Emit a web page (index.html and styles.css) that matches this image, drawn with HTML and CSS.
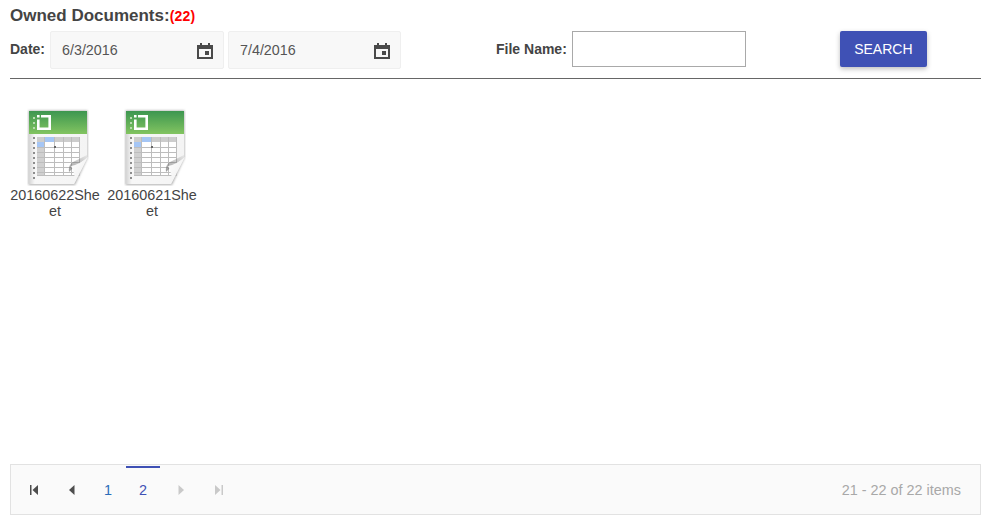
FILE: index.html
```html
<!DOCTYPE html>
<html lang="en">
<head>
<meta charset="utf-8">
<title>Owned Documents</title>
<link rel="stylesheet" href="styles.css">
</head>
<body>
<svg class="defs" width="0" height="0" aria-hidden="true">
  <defs>
    <linearGradient id="hdr" x1="0" y1="0" x2="0" y2="1">
      <stop offset="0" stop-color="#3d9650"/>
      <stop offset="1" stop-color="#82c460"/>
    </linearGradient>
    <linearGradient id="paper" x1="0" y1="0" x2="1" y2="0">
      <stop offset="0" stop-color="#d4d4d4"/>
      <stop offset="0.1" stop-color="#f7f7f7"/>
      <stop offset="1" stop-color="#f4f4f4"/>
    </linearGradient>
    <linearGradient id="curl" x1="0" y1="0" x2="1" y2="1">
      <stop offset="0" stop-color="#ffffff"/>
      <stop offset="1" stop-color="#ececec"/>
    </linearGradient>
    <linearGradient id="fold" x1="0" y1="1" x2="1" y2="0">
      <stop offset="0" stop-color="#6f6f6f" stop-opacity="0.7"/>
      <stop offset="1" stop-color="#6f6f6f" stop-opacity="0.1"/>
    </linearGradient>
    <filter id="shade" x="-10%" y="-10%" width="120%" height="120%"><feGaussianBlur stdDeviation="1"/></filter>
    <filter id="soft" x="-5%" y="-5%" width="110%" height="110%"><feGaussianBlur stdDeviation="0.400"/></filter>
    <symbol id="sheet" viewBox="0 0 62 78">
      <path d="M1.500 2.500H60.500V50L48 77H1.500Z" fill="#b0b0b0" filter="url(#shade)"/>
      <g filter="url(#soft)">
        <path d="M2 3H60V50L47 76H2Z" fill="url(#paper)"/>
        <rect x="2" y="3" width="58" height="23" fill="url(#hdr)"/>
        <path d="M10 7h2.600v2.600H10zM14 7h10v15H10V11.500h2.600v8h8.800V9.600H14z" fill="#fff"/>
        <g fill="#b9d9b0">
          <rect x="6" y="9" width="2" height="2"/><rect x="6" y="14" width="2" height="2"/><rect x="6" y="19" width="2" height="2"/>
        </g>
        <g fill="#8d8d8d">
          <rect x="6" y="29" width="2" height="2"/><rect x="6" y="34" width="2" height="2"/><rect x="6" y="39" width="2" height="2"/><rect x="6" y="44" width="2" height="2"/><rect x="6" y="49" width="2" height="2"/><rect x="6" y="54" width="2" height="2"/><rect x="6" y="59" width="2" height="2"/><rect x="6" y="64" width="2" height="2"/><rect x="6" y="69" width="2" height="2"/>
        </g>
        <rect x="10" y="29" width="43" height="39" fill="#fff"/>
        <rect x="10" y="29" width="43" height="5" fill="#cdcdcd"/>
        <rect x="10" y="34" width="7" height="34" fill="#d0d0d0"/>
        <rect x="17" y="29" width="10" height="5" fill="#a5c6f5"/>
        <rect x="10" y="34" width="7" height="5" fill="#a5c6f5"/>
        <path d="M10 39.500H53M10 44.500H53M10 49.500H53M10 54.500H53M10 59.500H53M10 64.500H53M10 67.500H53M17.500 29V68M27.500 29V68M36.500 29V68M44.500 29V68M52.500 29V68" stroke="#bdbdbd" stroke-width="1" fill="none"/>
        <rect x="27" y="38" width="2" height="2" fill="#666"/>
        <path d="M42 64Q41 57 46 54L60 47V50L46 60Z" fill="url(#fold)"/>
        <path d="M61 49Q52 57 44 58Q49 66 47 76Z" fill="url(#curl)"/>
      </g>
    </symbol>
    <symbol id="cal" viewBox="0 0 16 16">
      <path d="M3 0h2v2h6V0h2v2h3v14H0V2h3zM2 6v8h12V6z" fill="#4a4a4a"/>
      <rect x="8" y="8" width="4" height="4" fill="#4a4a4a"/>
    </symbol>
  </defs>
</svg>

<main class="page">
  <h1 class="title">Owned Documents:<span class="count">(22)</span></h1>

  <form class="filters">
    <label class="label date-label">Date:</label>
    <div class="picker"><span class="picker-value">6/3/2016</span><svg class="cal" width="16" height="16"><use href="#cal"/></svg></div>
    <div class="picker"><span class="picker-value">7/4/2016</span><svg class="cal" width="16" height="16"><use href="#cal"/></svg></div>
    <label class="label file-label">File Name:</label>
    <input class="file-input" type="text" aria-label="File Name">
    <button class="search" type="button">Search</button>
  </form>

  <div class="docs">
    <div class="doc">
      <svg class="doc-icon" width="62" height="78"><use href="#sheet"/></svg>
      <span class="doc-name">20160622Sheet</span>
    </div>
    <div class="doc">
      <svg class="doc-icon" width="62" height="78"><use href="#sheet"/></svg>
      <span class="doc-name">20160621Sheet</span>
    </div>
  </div>

  <nav class="pager">
    <a class="nav"><svg width="10" height="10" viewBox="0 0 10 10"><path d="M1 0h1.500v10H1zM9 0v10L3.500 5z" fill="#4d4d4d"/></svg></a>
    <a class="nav"><svg width="10" height="10" viewBox="0 0 10 10"><path d="M7.500 0v10L2 5z" fill="#4d4d4d"/></svg></a>
    <a class="num">1</a>
    <a class="num active">2</a>
    <a class="nav off"><svg width="10" height="10" viewBox="0 0 10 10"><path d="M2.500 0v10L8 5z" fill="#c9c9c9"/></svg></a>
    <a class="nav off"><svg width="10" height="10" viewBox="0 0 10 10"><path d="M1 0v10L6.500 5zM7.500 0H9v10H7.500z" fill="#c9c9c9"/></svg></a>
    <span class="info">21 - 22 of 22 items</span>
  </nav>
</main>
</body>
</html>
```

FILE: styles.css
```css
* { box-sizing: border-box; }
html, body { margin: 0; height: 100%; }
body { font-family: "Liberation Sans", Arial, sans-serif; font-size: 14px; color: #444; background: #fff; }
.defs { display: block; height: 0; }
.page { width: 994px; height: 523px; padding: 7px 13px 8px 10px; display: flex; flex-direction: column; }
.title { margin: 0; font-size: 17px; font-weight: bold; line-height: 18px; color: #444; }
.count { font-size: 14px; letter-spacing: 0.2px; color: #f00; }
.filters { flex: none; display: flex; align-items: flex-start; height: 48px; margin-top: 6px; padding-bottom: 9px; border-bottom: 1px solid #666; }
.label { font-weight: bold; line-height: 16px; color: #444; }
.date-label { margin: 10px 5px 0 0; }
.picker { width: 174px; height: 38px; margin-right: 4px; padding: 0 10px 0 11px; display: flex; align-items: center; justify-content: space-between; background: #f8f8f8; border: 1px solid #efefef; border-radius: 2px; color: #555; }
.picker + .picker { width: 173px; margin-right: 0; }
.picker-value { font-size: 14.3px; }
.cal { flex: none; margin-top: 2px; }
.file-label { margin: 10px 5px 0 95px; }
.file-input { width: 174px; height: 36px; margin: 0; padding: 0 6px; border: 1px solid #a9a9a9; background: #fff; border-radius: 0; }
.search { width: 87px; height: 36px; margin-left: 94px; padding: 0; border: 0; border-radius: 2px; background: #3f51b5; color: #fff; font: 14px "Liberation Sans", Arial, sans-serif; text-transform: uppercase; box-shadow: 0 2px 5px rgba(0, 0, 0, 0.26); }
.docs { flex: 1; display: flex; align-items: flex-start; gap: 7px; padding-top: 29px; }
.doc { width: 90px; display: flex; flex-direction: column; align-items: center; text-align: center; }
.doc-icon { display: block; margin-left: 6px; }
.doc-name { display: block; width: 90px; margin-top: 1px; font-size: 14.4px; line-height: 16px; color: #444; overflow-wrap: anywhere; }
.pager { flex: none; height: 51px; display: flex; align-items: center; padding: 0 19px 0 0; background: #fafafa; border: 1px solid #e2e2e2; }
.nav { width: 39px; height: 34px; display: flex; align-items: center; justify-content: center; }
.nav:first-child { margin-left: 3px; }
.nav:nth-child(2) { width: 38px; }
.num { width: 34px; height: 34px; margin-right: 1px; display: flex; align-items: center; justify-content: center; color: #2b6cb8; font-size: 14.4px; }
.num.active { margin-right: 0; color: #3f51b5; border-top: 2px solid #3f51b5; align-self: flex-start; margin-top: 1px; height: 46px; }
.nav.off:nth-child(5) { padding-left: 2px; }
.info { margin-left: auto; font-size: 14.4px; color: #a8a8a8; }
```
